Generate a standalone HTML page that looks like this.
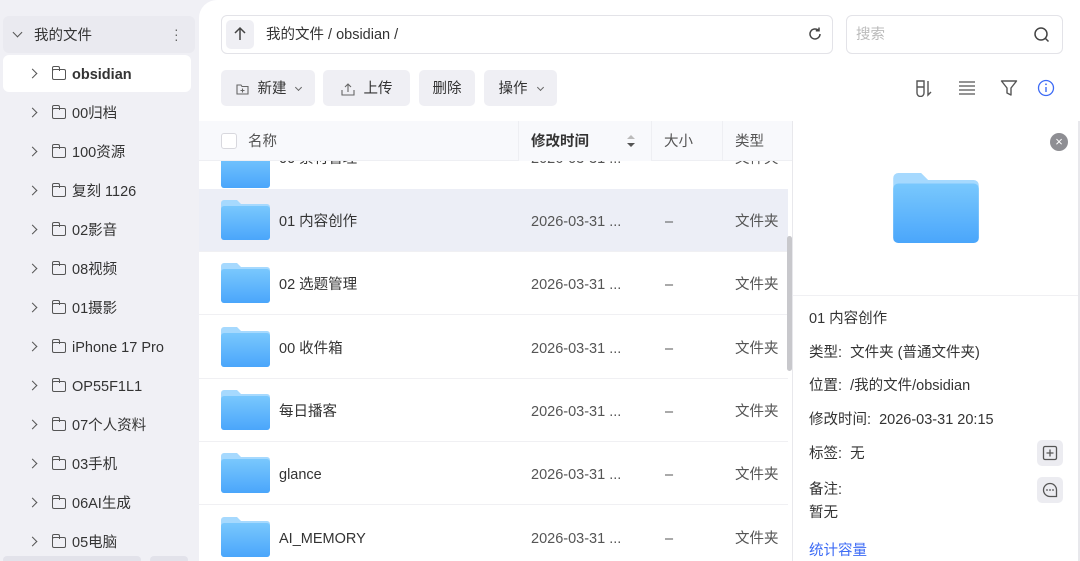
<!DOCTYPE html>
<html><head><meta charset="utf-8"><style>
*{box-sizing:border-box;margin:0;padding:0}
html,body{width:1080px;height:561px;overflow:hidden}
body{background:#f0f0f5;font-family:"Liberation Sans","Noto Sans CJK SC",sans-serif;color:#333;font-size:14px;line-height:20px;position:relative}
.a{position:absolute}
.side .it{position:absolute;left:0;width:192px;height:36px;font-size:14.5px;color:#333}
.chev{position:absolute;left:29px;top:14px;width:7px;height:7px;border-right:1.4px solid #555;border-top:1.4px solid #555;transform:rotate(45deg)}
.fi{position:absolute;left:52px;top:13px;width:14px;height:11px;border:1.4px solid #555;border-radius:2px}
.fi:before{content:"";position:absolute;left:-1.4px;top:-4px;width:6px;height:4px;border:1.4px solid #555;border-bottom:none;border-radius:2px 2px 0 0}
.side .it span{position:absolute;left:72px;top:9px;line-height:20px;white-space:nowrap}
.main{position:absolute;left:199px;top:0;width:881px;height:561px;background:#fff;border-top-left-radius:18px}
.btn{position:absolute;top:70px;height:36px;background:#efeff4;border-radius:5px;display:flex;align-items:center;justify-content:center;font-size:14.5px;color:#333;padding-top:2px}
.row{position:absolute;left:199px;width:589px;height:63px;border-bottom:1px solid #f0f0f3}
.fold{position:absolute;left:22px;top:11px;width:49px;height:40px}
.row div{position:absolute;top:23px;line-height:20px;font-size:14.5px;white-space:nowrap}
.row .n{left:80px}
.row .d{left:332px;color:#555}
.row .s{left:466px;color:#555}
.row .t{left:536px;color:#555}
.rp div.l{position:absolute;left:809px;font-size:14.5px;color:#333;line-height:20px}
</style></head><body>
<svg width="0" height="0" style="position:absolute"><defs>
<linearGradient id="g1" x1="0" y1="0" x2="0" y2="1"><stop offset="0" stop-color="#79c8fd"/><stop offset="1" stop-color="#4aa6fb"/></linearGradient>
<symbol id="fd" viewBox="0 0 49 40"><path d="M3 0h13l4 4h26a3 3 0 0 1 3 3v30a3 3 0 0 1-3 3H3a3 3 0 0 1-3-3V3a3 3 0 0 1 3-3z" fill="#a6d9fe"/><rect x="0" y="6" width="49" height="34" rx="3" fill="url(#g1)"/></symbol>
</defs></svg>
<div class="side">
<div class="a" style="left:3px;top:16px;width:192px;height:37px;background:#eaeaf0;border-radius:6px"></div>
<div class="a" style="left:14px;top:29px;width:7px;height:7px;border-right:1.4px solid #555;border-bottom:1.4px solid #555;transform:rotate(45deg)"></div>
<div class="a" style="left:34px;top:26px;font-size:14.5px">我的文件</div>
<div class="a" style="left:174px;top:27px;color:#666;font-size:14px;line-height:5px">·<br>·<br>·</div>
<div class="a" style="left:3px;top:55px;width:188px;height:37px;background:#fff;border-radius:6px"></div>
<div class="it" style="top:56px"><i class="chev"></i><i class="fi"></i><span style="font-weight:bold">obsidian</span></div>
<div class="it" style="top:95px"><i class="chev"></i><i class="fi"></i><span>00归档</span></div>
<div class="it" style="top:134px"><i class="chev"></i><i class="fi"></i><span>100资源</span></div>
<div class="it" style="top:173px"><i class="chev"></i><i class="fi"></i><span>复刻 1126</span></div>
<div class="it" style="top:212px"><i class="chev"></i><i class="fi"></i><span>02影音</span></div>
<div class="it" style="top:251px"><i class="chev"></i><i class="fi"></i><span>08视频</span></div>
<div class="it" style="top:290px"><i class="chev"></i><i class="fi"></i><span>01摄影</span></div>
<div class="it" style="top:329px"><i class="chev"></i><i class="fi"></i><span>iPhone 17 Pro</span></div>
<div class="it" style="top:368px"><i class="chev"></i><i class="fi"></i><span>OP55F1L1</span></div>
<div class="it" style="top:407px"><i class="chev"></i><i class="fi"></i><span>07个人资料</span></div>
<div class="it" style="top:446px"><i class="chev"></i><i class="fi"></i><span>03手机</span></div>
<div class="it" style="top:485px"><i class="chev"></i><i class="fi"></i><span>06AI生成</span></div>
<div class="it" style="top:524px"><i class="chev"></i><i class="fi"></i><span>05电脑</span></div>
<div class="a" style="left:3px;top:556px;width:138px;height:8px;background:#e2e2ea;border-radius:4px"></div>
<div class="a" style="left:150px;top:556px;width:38px;height:8px;background:#e2e2ea;border-radius:4px"></div>
</div>
<div class="main"></div>
<!-- address -->
<div class="a" style="left:221px;top:15px;width:612px;height:39px;border:1px solid #e3e3e8;border-radius:6px"></div>
<div class="a" style="left:226px;top:20px;width:28px;height:29px;background:#efeff4;border-radius:5px"></div>
<svg class="a" style="left:232px;top:26px" width="16" height="16" viewBox="0 0 16 16"><path d="M8 14V2M3 7l5-5 5 5" stroke="#444" stroke-width="1.5" fill="none"/></svg>
<div class="a" style="left:266px;top:25px;font-size:14.5px">我的文件 / obsidian /</div>
<svg class="a" style="left:807px;top:26px" width="16" height="16" viewBox="0 0 16 16"><path d="M13 8a5 5 0 1 1-1.5-3.6M12 1.5v3.2H8.8" stroke="#444" stroke-width="1.5" fill="none"/></svg>
<div class="a" style="left:846px;top:15px;width:217px;height:39px;border:1px solid #e3e3e8;border-radius:6px"></div>
<div class="a" style="left:856px;top:25px;color:#bbb;font-size:14.5px">搜索</div>
<svg class="a" style="left:1033px;top:26px" width="18" height="18" viewBox="0 0 18 18"><circle cx="8" cy="8" r="6" stroke="#444" stroke-width="1.5" fill="none"/><path d="M12.5 12.5l3 3" stroke="#444" stroke-width="1.5"/></svg>
<!-- toolbar -->
<div class="btn" style="left:221px;width:94px"><svg width="13" height="13" viewBox="0 0 13 13" style="margin-right:9px"><path d="M1 2h4l1 1.5h6V11H1z" stroke="#666" fill="none" stroke-width="1.1"/><path d="M6.5 5.5v4M4.5 7.5h4" stroke="#666" stroke-width="1.1"/></svg>新建<span style="margin-left:9px;width:5px;height:5px;border-right:1.2px solid #666;border-bottom:1.2px solid #666;transform:rotate(45deg);margin-top:-3px"></span></div>
<div class="btn" style="left:323px;width:87px"><svg width="14" height="14" viewBox="0 0 14 14" style="margin-right:9px"><path d="M7 10V2M4 5l3-3 3 3M1 8v5h12V8" stroke="#666" fill="none" stroke-width="1.1"/></svg>上传</div>
<div class="btn" style="left:419px;width:56px">删除</div>
<div class="btn" style="left:484px;width:73px">操作<span style="margin-left:10px;width:5px;height:5px;border-right:1.2px solid #666;border-bottom:1.2px solid #666;transform:rotate(45deg);margin-top:-3px"></span></div>
<svg class="a" style="left:915px;top:79px" width="20" height="18" viewBox="0 0 20 18"><path d="M2 2h7v12a3.5 3.5 0 0 1-7 0z M2 8h7 M13 2v14l3-3" stroke="#555" fill="none" stroke-width="1.4"/></svg>
<svg class="a" style="left:958px;top:80px" width="18" height="16" viewBox="0 0 18 16"><path d="M1 2h16M1 6h16M1 10h16M1 14h16" stroke="#555" stroke-width="1.3"/></svg>
<svg class="a" style="left:1000px;top:79px" width="18" height="18" viewBox="0 0 18 18"><path d="M1.5 2h15l-5.5 7v7l-4-2V9z" stroke="#555" fill="none" stroke-width="1.4" stroke-linejoin="round"/></svg>
<svg class="a" style="left:1037px;top:79px" width="18" height="18" viewBox="0 0 18 18"><circle cx="9" cy="9" r="7.5" stroke="#3d6bf5" fill="none" stroke-width="1.3"/><path d="M9 8v5" stroke="#3d6bf5" stroke-width="1.4"/><circle cx="9" cy="5.3" r="0.9" fill="#3d6bf5"/></svg>
<!-- table -->
<div class="a" style="left:199px;top:160px;width:589px;height:28px;overflow:hidden">
<div style="position:absolute;left:22px;top:-12px;width:49px;height:40px"><svg width="49" height="40"><use href="#fd"/></svg></div>
<div style="position:absolute;left:80px;top:-11px;color:#333;font-size:14.5px">00 素材管理</div>
<div style="position:absolute;left:332px;top:-11px;color:#555;font-size:14.5px">2026-03-31 ...</div>
<div style="position:absolute;left:536px;top:-11px;color:#555;font-size:14.5px">文件夹</div>
</div>
<div class="a" style="left:199px;top:121px;width:594px;height:40px;background:#f8f9fc;border-bottom:1px solid #eeeff3"></div>
<div class="a" style="left:518px;top:121px;width:133px;height:40px;background:#f8f9fc;border-left:1px solid #eeeff3"></div>
<div class="a" style="left:651px;top:121px;width:1px;height:40px;background:#eeeff3"></div>
<div class="a" style="left:722px;top:121px;width:1px;height:40px;background:#eeeff3"></div>
<div class="a" style="left:221px;top:133px;width:16px;height:16px;border:1px solid #d8d8de;border-radius:3px;background:#fff"></div>
<div class="a" style="left:248px;top:132px;color:#555;font-size:14.5px">名称</div>
<div class="a" style="left:531px;top:132px;font-weight:bold;font-size:14.5px">修改时间</div>
<svg class="a" style="left:626px;top:133px" width="10" height="16" viewBox="0 0 10 16"><path d="M1 6l4-4 4 4z" fill="#bbb"/><path d="M1 10l4 4 4-4z" fill="#555"/></svg>
<div class="a" style="left:664px;top:132px;color:#555;font-size:14.5px">大小</div>
<div class="a" style="left:735px;top:132px;color:#555;font-size:14.5px">类型</div>

<div class="row" style="top:189px;background:#eceef6"><svg class="fold" width="49" height="40"><use href="#fd"/></svg><div class="n">01 内容创作</div><div class="d">2026-03-31 ...</div><div class="s">–</div><div class="t">文件夹</div></div>
<div class="row" style="top:252px"><svg class="fold" width="49" height="40"><use href="#fd"/></svg><div class="n">02 选题管理</div><div class="d">2026-03-31 ...</div><div class="s">–</div><div class="t">文件夹</div></div>
<div class="row" style="top:316px"><svg class="fold" width="49" height="40"><use href="#fd"/></svg><div class="n">00 收件箱</div><div class="d">2026-03-31 ...</div><div class="s">–</div><div class="t">文件夹</div></div>
<div class="row" style="top:379px"><svg class="fold" width="49" height="40"><use href="#fd"/></svg><div class="n">每日播客</div><div class="d">2026-03-31 ...</div><div class="s">–</div><div class="t">文件夹</div></div>
<div class="row" style="top:442px"><svg class="fold" width="49" height="40"><use href="#fd"/></svg><div class="n">glance</div><div class="d">2026-03-31 ...</div><div class="s">–</div><div class="t">文件夹</div></div>
<div class="row" style="top:506px"><svg class="fold" width="49" height="40"><use href="#fd"/></svg><div class="n">AI_MEMORY</div><div class="d">2026-03-31 ...</div><div class="s">–</div><div class="t">文件夹</div></div>
<div class="a" style="left:787px;top:236px;width:5px;height:135px;background:#c8c8cc;border-radius:3px"></div>
<!-- right panel -->
<div class="rp">
<div class="a" style="left:792px;top:121px;width:1px;height:440px;background:#e8e8ec"></div>
<div class="a" style="left:1050px;top:133px;width:18px;height:18px;border-radius:50%;background:#8e8e93;color:#fff;font-size:13px;text-align:center;line-height:18px">×</div>
<svg class="a" style="left:893px;top:173px" width="86" height="70" viewBox="0 0 49 40"><use href="#fd"/></svg>
<div class="a" style="left:793px;top:295px;width:287px;height:1px;background:#f0f0f3"></div>
<div class="l" style="top:309px">01 内容创作</div>
<div class="l" style="top:343px">类型:&nbsp; 文件夹 (普通文件夹)</div>
<div class="l" style="top:376px">位置:&nbsp; /我的文件/obsidian</div>
<div class="l" style="top:410px">修改时间:&nbsp; 2026-03-31 20:15</div>
<div class="l" style="top:444px">标签:&nbsp; 无</div>
<div class="l" style="top:480px">备注:</div>
<div class="l" style="top:503px">暂无</div>
<div class="l" style="top:541px;color:#3d6bf5">统计容量</div>
<div class="a" style="left:1037px;top:440px;width:26px;height:26px;background:#ececf1;border-radius:5px"></div>
<svg class="a" style="left:1042px;top:445px" width="16" height="16" viewBox="0 0 16 16"><rect x="1.5" y="1.5" width="13" height="13" rx="1.5" stroke="#555" fill="none" stroke-width="1.3"/><path d="M8 4.5v7M4.5 8h7" stroke="#555" stroke-width="1.3"/></svg>
<div class="a" style="left:1037px;top:477px;width:26px;height:26px;background:#ececf1;border-radius:5px"></div>
<svg class="a" style="left:1042px;top:482px" width="16" height="16" viewBox="0 0 16 16"><path d="M8 1.5a6.5 6.5 0 1 0 0 13h6.5V8A6.5 6.5 0 0 0 8 1.5z" stroke="#555" fill="none" stroke-width="1.3"/><circle cx="5" cy="8" r=".9" fill="#555"/><circle cx="8" cy="8" r=".9" fill="#555"/><circle cx="11" cy="8" r=".9" fill="#555"/></svg>
<div class="a" style="left:1078px;top:121px;width:2px;height:440px;background:#e8e8ec"></div>
</div>
</body></html>
